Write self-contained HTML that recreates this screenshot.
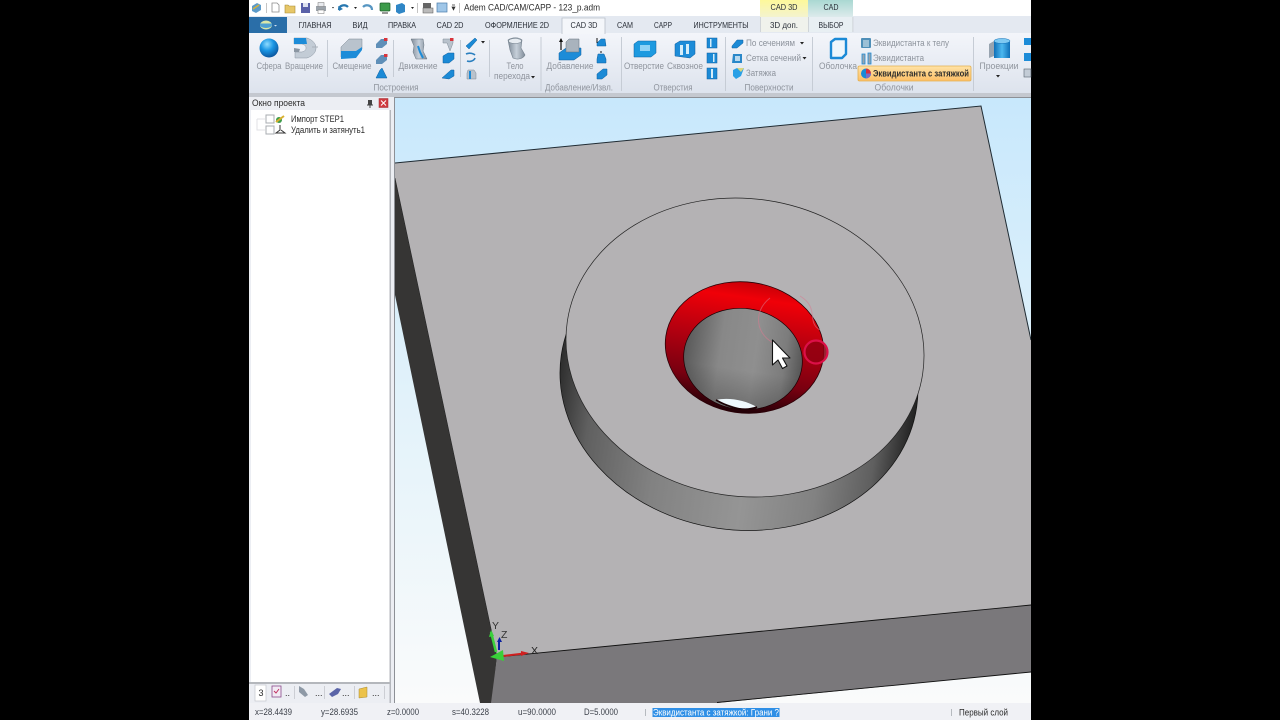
<!DOCTYPE html>
<html lang="ru"><head><meta charset="utf-8"><title>Adem CAD/CAM/CAPP</title>
<style>
html,body{margin:0;padding:0;background:#000;width:1280px;height:720px;overflow:hidden}
svg{display:block}
#root{filter:blur(.3px)}
text{font-family:"Liberation Sans","DejaVu Sans",sans-serif;font-size:9px}
.g{fill:#8d939c}.d{fill:#2b2b2b}.l{fill:#8f949d;text-anchor:middle}.m{text-anchor:middle;fill:#2a2f38;font-size:8.6px}
.b{fill:#1b8ad6;stroke:#0f5f9e;stroke-width:.5}.c{fill:#b9c2cc;stroke:#7f8a96;stroke-width:.5}
</style></head><body>
<svg id="root" width="1280" height="720" viewBox="0 0 1280 720" xmlns="http://www.w3.org/2000/svg">
<defs>
<linearGradient id="bg" x1="0" y1="0" x2="0" y2="1"><stop offset="0" stop-color="#c8e8fc"/><stop offset=".5" stop-color="#e2f2fa"/><stop offset="1" stop-color="#fafbfb"/></linearGradient>
<linearGradient id="rib" x1="0" y1="0" x2="0" y2="1"><stop offset="0" stop-color="#f3f5fa"/><stop offset="1" stop-color="#dde3ed"/></linearGradient>
<linearGradient id="side" gradientUnits="userSpaceOnUse" x1="560" y1="0" x2="920" y2="0"><stop offset="0" stop-color="#2e2e2e"/><stop offset=".1" stop-color="#606060"/><stop offset=".3" stop-color="#828282"/><stop offset=".55" stop-color="#959595"/><stop offset=".75" stop-color="#828282"/><stop offset=".9" stop-color="#5f5f5f"/><stop offset="1" stop-color="#1f1f1f"/></linearGradient>
<linearGradient id="red" gradientUnits="userSpaceOnUse" x1="745" y1="282" x2="745" y2="414"><stop offset="0" stop-color="#c80008"/><stop offset=".12" stop-color="#f00008"/><stop offset=".45" stop-color="#b00010"/><stop offset=".75" stop-color="#780010"/><stop offset="1" stop-color="#1c0006"/></linearGradient>
<linearGradient id="inn" gradientUnits="userSpaceOnUse" x1="684" y1="0" x2="802" y2="0"><stop offset="0" stop-color="#5a5a5a"/><stop offset=".3" stop-color="#888"/><stop offset=".6" stop-color="#8f8f8f"/><stop offset=".85" stop-color="#7c7c7c"/><stop offset="1" stop-color="#575757"/></linearGradient>
<linearGradient id="sh" gradientUnits="userSpaceOnUse" x1="0" y1="370" x2="0" y2="412"><stop offset="0" stop-color="#000" stop-opacity="0"/><stop offset="1" stop-color="#000" stop-opacity=".25"/></linearGradient>
<radialGradient id="sp" cx=".4" cy=".3" r=".75"><stop offset="0" stop-color="#8fdcff"/><stop offset=".45" stop-color="#1a96e4"/><stop offset="1" stop-color="#0a4f96"/></radialGradient>
<linearGradient id="hl" x1="0" y1="0" x2="0" y2="1"><stop offset="0" stop-color="#ffe3a6"/><stop offset="1" stop-color="#fdbf66"/></linearGradient>
<linearGradient id="yel" x1="0" y1="0" x2="0" y2="1"><stop offset="0" stop-color="#fdf89a"/><stop offset="1" stop-color="#f4f3cf"/></linearGradient>
<linearGradient id="tea" x1="0" y1="0" x2="0" y2="1"><stop offset="0" stop-color="#a9d8d2"/><stop offset="1" stop-color="#dcebec"/></linearGradient>
<linearGradient id="cyl" x1="0" y1="0" x2="1" y2="0"><stop offset="0" stop-color="#0f70b8"/><stop offset=".5" stop-color="#4cb8f0"/><stop offset="1" stop-color="#0f70b8"/></linearGradient>
<linearGradient id="gry" x1="0" y1="0" x2="1" y2="0"><stop offset="0" stop-color="#7f8b98"/><stop offset=".5" stop-color="#c7d0da"/><stop offset="1" stop-color="#7f8b98"/></linearGradient>
</defs>

<!-- app base -->
<rect x="249" y="0" width="782" height="720" fill="#eceef3"/>
<rect x="249" y="0" width="782" height="16" fill="#fff"/>
<rect x="249" y="16" width="782" height="17" fill="#e4e9f1"/>
<rect x="249" y="33" width="782" height="60" fill="url(#rib)"/>
<rect x="249" y="93" width="782" height="4" fill="#c4c8cf"/>

<!-- quick access toolbar -->
<g>
<path d="M252 6l5-3 4 2v5l-5 3-4-2z" fill="#5d9bc9"/><path d="M253 9l6-4" stroke="#d4b23c" stroke-width="1.500"/>
<rect x="266" y="3" width=".8" height="10" fill="#b5b5b5"/>
<path d="M272 3h5l2 2v7h-7z" fill="#fff" stroke="#8a8a8a" stroke-width=".8"/>
<path d="M285 5h3l1 1h6v7h-10z" fill="#e7c768" stroke="#a88a35" stroke-width=".6"/>
<rect x="301" y="3" width="9" height="10" fill="#5a61a8"/><rect x="303" y="3" width="5" height="4" fill="#dfe3ef"/>
<rect x="316" y="6" width="10" height="5" fill="#9ca3aa"/><rect x="318" y="2.500" width="6" height="4" fill="#e8eaee" stroke="#777" stroke-width=".5"/><rect x="318" y="10" width="6" height="3.500" fill="#fff" stroke="#777" stroke-width=".5"/>
<path d="M332 7l2 0 -1 1.500z" fill="#222"/>
<path d="M339 10c0-5 6-6 9-3" fill="none" stroke="#2878b0" stroke-width="2.200"/><path d="M338 6l1 5 4-2z" fill="#2878b0"/>
<path d="M354 7h3l-1.500 2z" fill="#222"/>
<path d="M372 10c0-5-6-6-9-3" fill="none" stroke="#5796c2" stroke-width="2.200"/>
<rect x="380" y="3" width="10" height="8" rx="1" fill="#3c9b4a" stroke="#1c5c28" stroke-width=".7"/><path d="M382 13h6" stroke="#333"/>
<path d="M396 5l6-2 3 2v7l-6 2-3-2z" fill="#2f86c6"/>
<path d="M411 7h3l-1.500 2z" fill="#222"/>
<rect x="417" y="3" width=".8" height="10" fill="#b5b5b5"/>
<rect x="423" y="3" width="8" height="5" fill="#666"/><rect x="423" y="8" width="10" height="5" fill="#bbb" stroke="#555" stroke-width=".5"/>
<rect x="437" y="3" width="10" height="9" fill="#9fc6e8" stroke="#4a7cab" stroke-width=".7"/>
<path d="M452 5h3M452 7h3l-1.500 3z" stroke="#333" stroke-width=".7" fill="#333"/>
<rect x="459" y="3" width=".8" height="10" fill="#b5b5b5"/>
</g>
<text x="464" y="10.500" class="d" style="font-size:9.600px" textLength="136" lengthAdjust="spacingAndGlyphs">Adem CAD/CAM/CAPP - 123_p.adm</text>

<!-- contextual tabs -->
<rect x="760" y="0" width="48" height="17" fill="url(#yel)"/>
<rect x="808" y="0" width="45" height="17" fill="url(#tea)"/>
<rect x="760" y="17" width="48" height="15" fill="#f0f2ec"/><rect x="808" y="17" width="45" height="15" fill="#e8eff3"/>
<rect x="760" y="17" width=".8" height="15" fill="#c9cdd2"/><rect x="808" y="17" width=".8" height="15" fill="#c9cdd2"/><rect x="852.500" y="17" width=".8" height="15" fill="#c9cdd2"/>
<text x="784" y="10" class="m" textLength="27" lengthAdjust="spacingAndGlyphs">CAD 3D</text>
<text x="831" y="10" class="m" textLength="15" lengthAdjust="spacingAndGlyphs">CAD</text>

<!-- tabs -->
<rect x="249" y="17" width="38" height="16" fill="#2a6ea8"/>
<ellipse cx="266" cy="25" rx="6" ry="4.500" fill="#dbe7a8"/><path d="M260 25a6 3 0 0 0 12 0v-1.500h-12z" fill="#4fa0d2"/><path d="M274 25h3l-1.500 1.500z" fill="#cfe0f0"/>
<rect x="562" y="18" width="43" height="16" fill="#f4f6fa"/>
<path d="M562 34V18h43v16" fill="none" stroke="#b9c0ca" stroke-width=".8"/>
<text x="315" y="28" class="m" textLength="33" lengthAdjust="spacingAndGlyphs">ГЛАВНАЯ</text>
<text x="360" y="28" class="m" textLength="15" lengthAdjust="spacingAndGlyphs">ВИД</text>
<text x="402" y="28" class="m" textLength="28" lengthAdjust="spacingAndGlyphs">ПРАВКА</text>
<text x="450" y="28" class="m" textLength="27" lengthAdjust="spacingAndGlyphs">CAD 2D</text>
<text x="517" y="28" class="m" textLength="64" lengthAdjust="spacingAndGlyphs">ОФОРМЛЕНИЕ 2D</text>
<text x="584" y="28" class="m" textLength="27" lengthAdjust="spacingAndGlyphs">CAD 3D</text>
<text x="625" y="28" class="m" textLength="16" lengthAdjust="spacingAndGlyphs">CAM</text>
<text x="663" y="28" class="m" textLength="18" lengthAdjust="spacingAndGlyphs">CAPP</text>
<text x="721" y="28" class="m" textLength="55" lengthAdjust="spacingAndGlyphs">ИНСТРУМЕНТЫ</text>
<text x="784" y="28" class="m" textLength="28" lengthAdjust="spacingAndGlyphs">3D доп.</text>
<text x="831" y="28" class="m" textLength="25" lengthAdjust="spacingAndGlyphs">ВЫБОР</text>

<!-- ribbon separators -->
<g fill="#c6ccd5">
<rect x="327" y="40" width="1" height="37"/><rect x="393" y="40" width="1" height="37"/><rect x="460" y="40" width="1" height="37"/><rect x="489" y="40" width="1" height="37"/>
<rect x="540.500" y="37" width="1" height="54"/><rect x="621" y="37" width="1" height="54"/><rect x="725" y="37" width="1" height="54"/><rect x="812" y="37" width="1" height="54"/><rect x="973" y="37" width="1" height="54"/>
</g>

<!-- big icons -->
<circle cx="269" cy="48" r="9.500" fill="url(#sp)"/>
<path d="M294 38h13c6 2 9 6 9 10s-3 8-9 10h-12v-6h7c3-1 4-2 4-4s-1-3-4-4h-8z" fill="#c3ccd6" stroke="#8b96a2" stroke-width=".5"/>
<path d="M294 38h12l1 6h-13z" fill="#1d8cd8"/><path d="M294 48l6 1-1 3h-5z" fill="#8b96a2"/><path d="M312 47h6" stroke="#a9b1ba"/>
<path d="M341 47l8-8h13v10l-6 8h-15z" fill="#b9c3cd" stroke="#7b8793" stroke-width=".5"/><path d="M341 51h15l6-4v3l-6 8-15 1z" fill="#1d8cd8"/>
<path d="M411 39h12l1 6-1 6 4 8h-11l-3-7 1-6z" fill="url(#gry)" stroke="#66737f" stroke-width=".5"/><path d="M418 46l2 6 3 6" stroke="#1d8cd8" stroke-width="2" fill="none"/>
<path d="M508 40c4-3 11-3 14 0l-1 8 4 7c-2 4-8 5-12 3l-3-8z" fill="url(#gry)" stroke="#74818d" stroke-width=".6"/><ellipse cx="515" cy="41" rx="6.500" ry="2.500" fill="#e7ecf1" stroke="#74818d" stroke-width=".5"/>
<path d="M559 53l7-5h15v7l-7 5h-15z" fill="#1d8cd8" stroke="#0f5f9e" stroke-width=".5"/><path d="M566 42l3-3h10v13h-13z" fill="#a9b3bd" stroke="#65717c" stroke-width=".5"/><path d="M561 39v11" stroke="#111" stroke-width="1.200"/><path d="M559 42l2-4 2 4z" fill="#111"/>
<path d="M634 44l4-3h18v12l-5 4h-17z" fill="#1d9ae0" stroke="#0f5f9e" stroke-width=".5"/><path d="M640 45h10v6h-10z" fill="#8fd2f6"/>
<path d="M675 44l5-3h15v13l-5 4-15-2z" fill="#1d8cd8" stroke="#0f5f9e" stroke-width=".5"/><rect x="680" y="45" width="3" height="10" fill="#d6edf9"/><rect x="686" y="44" width="3" height="10" fill="#d6edf9"/>
<path d="M831 42l4-3h11v15l-4 4h-11z" fill="#eef6fb" stroke="#1b8ad6" stroke-width="2.400" stroke-linejoin="round"/>
<rect x="994" y="41" width="16" height="17" fill="url(#cyl)"/><ellipse cx="1002" cy="41" rx="8" ry="2.500" fill="#7ec9f2" stroke="#0f70b8" stroke-width=".5"/><path d="M989 44l5-3v15l-5 2z" fill="#98a4b0"/>

<!-- small icons -->
<g>
<path d="M376 44l5-5h6v5l-5 4h-6z" fill="#5f8fb8"/><rect x="384" y="38" width="3.500" height="3" fill="#d8343c"/>
<path d="M376 60l5-5h6v5l-5 4h-6z" fill="#5f8fb8"/><rect x="384" y="54" width="3.500" height="3" fill="#d8343c"/>
<path d="M376 78l4-8 2-2 5 10z" class="b"/>
<path d="M443 39h10v4l-3 8-3-8h-4z" class="c"/><rect x="450" y="38" width="3.500" height="3" fill="#d8343c"/>
<path d="M443 56l5-3h6v6l-5 4h-6z" class="b"/>
<path d="M442 78l9-8h3v6l-5 3z" class="b"/>
<path d="M466 46l9-8 2 2-8 9z" class="b"/>
<path d="M466 54c4-2 8 0 9 1M467 61c3 1 7 0 8-3" stroke="#2a7fbf" stroke-width="1.600" fill="none"/>
<path d="M468 70l6 0 2 3v6h-9v-6z" class="c"/><path d="M470 71v8" stroke="#1b8ad6" stroke-width="2"/>
<path d="M481 41h4l-2 2.500z" fill="#222"/>
<path d="M597 43l4-4h4l1 7h-9z" class="b"/><path d="M597 38v5" stroke="#111"/>
<path d="M597 59l1-5h6l2 5v4h-9z" class="b"/><path d="M601 53v-2" stroke="#111"/>
<path d="M597 74l6-5h4v6l-5 4h-5z" class="b"/>
<g class="b"><rect x="707" y="38" width="10" height="10"/><rect x="707" y="53" width="10" height="10"/><rect x="707" y="68" width="10" height="11"/></g>
<g fill="#d6edf9"><rect x="710" y="39" width="1.500" height="8"/><rect x="713" y="54" width="1.500" height="8"/><rect x="711" y="69" width="2" height="9"/></g>
<path d="M732 46l5-6h6v3l-6 5h-5z" class="b"/>
<path d="M733 54h9v9h-10z" fill="#2a88c9"/><path d="M735 56h5v5h-5z" fill="#b9d9ee"/>
<path d="M733 70l4-2h7l-3 8-5 3-3-3z" fill="#2aa0e6"/><path d="M737 68h7l-3 4z" fill="#dcd77c"/>
<rect x="861" y="38" width="10" height="10" rx="1" fill="#4f8fb8"/><rect x="863" y="40" width="6" height="7" fill="#9cc0d6"/>
<path d="M862 54h3v10h-3zM868 53h3v11h-3z" fill="#9aa4ae" stroke="#1b8ad6" stroke-width=".8"/>
</g>
<path d="M800 42h4l-2 2.500zM802.500 57h4l-2 2.500z" fill="#222"/>
<path d="M531 76h4l-2 2.500zM996 75h4l-2 2.500z" fill="#222"/>
<path d="M1024 38h7v7h-7zM1024 53h7v8h-7z" fill="#1d8cd8"/><rect x="1024" y="69" width="7" height="8" fill="#c3ccd6" stroke="#56626e" stroke-width=".6"/>

<rect x="858" y="66" width="113" height="15" rx="1.500" fill="url(#hl)" stroke="#e3b050" stroke-width=".8"/>
<circle cx="866" cy="73.500" r="5" fill="#1b8ad6"/><path d="M866 73.500V68.500a5 5 0 0 1 5 5z" fill="#d63040"/><path d="M866 73.500h5a5 5 0 0 1-5 5z" fill="#7c6cc8"/>

<!-- ribbon labels -->
<text x="269" y="69" class="l" textLength="25" lengthAdjust="spacingAndGlyphs">Сфера</text>
<text x="304" y="69" class="l" textLength="38" lengthAdjust="spacingAndGlyphs">Вращение</text>
<text x="352" y="69" class="l" textLength="39" lengthAdjust="spacingAndGlyphs">Смещение</text>
<text x="418" y="69" class="l" textLength="39" lengthAdjust="spacingAndGlyphs">Движение</text>
<text x="515" y="69" class="l" textLength="17" lengthAdjust="spacingAndGlyphs">Тело</text>
<text x="512" y="79" class="l" textLength="36" lengthAdjust="spacingAndGlyphs">перехода</text>
<text x="570" y="69" class="l" textLength="47" lengthAdjust="spacingAndGlyphs">Добавление</text>
<text x="644" y="69" class="l" textLength="40" lengthAdjust="spacingAndGlyphs">Отверстие</text>
<text x="685" y="69" class="l" textLength="36" lengthAdjust="spacingAndGlyphs">Сквозное</text>
<text x="838" y="69" class="l" textLength="38" lengthAdjust="spacingAndGlyphs">Оболочка</text>
<text x="999" y="69" class="l" textLength="39" lengthAdjust="spacingAndGlyphs">Проекции</text>
<text x="746" y="46" class="g" textLength="49" lengthAdjust="spacingAndGlyphs">По сечениям</text>
<text x="746" y="61" class="g" textLength="55" lengthAdjust="spacingAndGlyphs">Сетка сечений</text>
<text x="746" y="76" class="g" textLength="30" lengthAdjust="spacingAndGlyphs">Затяжка</text>
<text x="873" y="46" class="g" textLength="76" lengthAdjust="spacingAndGlyphs">Эквидистанта к телу</text>
<text x="873" y="61" class="g" textLength="51" lengthAdjust="spacingAndGlyphs">Эквидистанта</text>
<text x="873" y="76.500" class="d" textLength="96" lengthAdjust="spacingAndGlyphs" style="font-weight:bold">Эквидистанта с затяжкой</text>
<text x="396" y="90.500" class="l" textLength="45" lengthAdjust="spacingAndGlyphs">Построения</text>
<text x="579" y="90.500" class="l" textLength="68" lengthAdjust="spacingAndGlyphs">Добавление/Извл.</text>
<text x="673" y="90.500" class="l" textLength="39" lengthAdjust="spacingAndGlyphs">Отверстия</text>
<text x="769" y="90.500" class="l" textLength="49" lengthAdjust="spacingAndGlyphs">Поверхности</text>
<text x="894" y="90.500" class="l" textLength="39" lengthAdjust="spacingAndGlyphs">Оболочки</text>

<!-- project pane -->
<rect x="249" y="97" width="146" height="606" fill="#eceef3"/>
<rect x="251" y="110" width="139" height="573" fill="#fff"/>
<rect x="389.500" y="110" width="1.500" height="593" fill="#b4b7bc"/>
<text x="252" y="106" class="d" textLength="53" lengthAdjust="spacingAndGlyphs">Окно проекта</text>
<rect x="368" y="100" width="4" height="5" fill="#444"/><path d="M367 105h6M370 105v3" stroke="#444"/>
<rect x="379" y="98.500" width="9" height="9" fill="#cf3a40" stroke="#a02a30" stroke-width=".5"/><path d="M381 100.500l5 5m0-5l-5 5" stroke="#fff"/>
<path d="M257 119v11h8M257 119h8" stroke="#e0e2e6" fill="none"/>
<rect x="266" y="115" width="8" height="8" fill="#fff" stroke="#a8acb2"/><rect x="266" y="126" width="8" height="8" fill="#fff" stroke="#a8acb2"/>
<circle cx="279" cy="120" r="3" fill="#3c9b4a"/><path d="M276 122l8-6" stroke="#d8b030" stroke-width="2"/>
<path d="M280 125v5l-4 3h9l-4-3" fill="none" stroke="#333"/>
<text x="291" y="122" class="d" textLength="53" lengthAdjust="spacingAndGlyphs">Импорт STEP1</text>
<text x="291" y="133" class="d" textLength="74" lengthAdjust="spacingAndGlyphs">Удалить и затянуть1</text>

<!-- pane tabs -->
<rect x="249" y="682" width="141" height="2" fill="#b4b7bc"/>
<rect x="255" y="685" width="11" height="16" fill="#fff" stroke="#c4c7cc" stroke-width=".7"/>
<text x="261" y="696" class="d" text-anchor="middle" style="font-size:9px">3</text>
<rect x="272" y="686" width="9" height="11" fill="#f2eaf4" stroke="#8a4a8a" stroke-width=".8"/><path d="M274 691l2 2 3-4" stroke="#c03060" fill="none"/>
<text x="285" y="696" class="d">..</text>
<path d="M299 686l5 3 4 6-3 2-6-5z" fill="#8e99a6"/>
<text x="315" y="696" class="d">...</text>
<path d="M329 694l8-6 4 1-3 5-6 3z" fill="#5a64a8"/>
<text x="342" y="696" class="d">...</text>
<path d="M359 689l8-2v10l-8 1z" fill="#ecc24a" stroke="#a88a35" stroke-width=".5"/>
<text x="372" y="696" class="d">...</text>
<g fill="#c4c7cc"><rect x="294" y="686" width=".8" height="13"/><rect x="324" y="686" width=".8" height="13"/><rect x="354" y="686" width=".8" height="13"/><rect x="384" y="686" width=".8" height="13"/></g>

<!-- viewport -->
<svg x="395" y="98" width="636" height="605" viewBox="395 98 636 605">
<rect x="395" y="98" width="636" height="605" fill="url(#bg)"/>
<path d="M395 178L497 657L492 703H480L395 295z" fill="#363534"/>
<path d="M497 657L1031 605V672L717 703H491z" fill="#7a787b"/>
<path d="M395 163L981 106L1031 340V605L497 657L395 178z" fill="#b4b2b4"/>
<path d="M395 163L981 106L1031 340" fill="none" stroke="#1f2b33" stroke-width="1"/>
<path d="M497 657L1031 605" stroke="#111" stroke-width=".9"/>
<path d="M717 702.500L1031 672" stroke="#111" stroke-width=".9"/>
<path d="M497 657L395 178" stroke="#222" stroke-width=".6"/>

<!-- boss -->
<ellipse cx="739" cy="381" rx="179.600" ry="148.800" transform="rotate(8.300 739 381)" fill="url(#side)" stroke="#111" stroke-width=".7"/>
<ellipse cx="745" cy="347.500" rx="179.600" ry="148.800" transform="rotate(8.300 745 347.500)" fill="#b4b2b4" stroke="#222" stroke-width=".7"/>

<!-- hole -->
<ellipse cx="744.500" cy="347.500" rx="79.500" ry="65.500" transform="rotate(8.300 744.500 347.500)" fill="url(#red)" stroke="#2a0006" stroke-width=".8"/>
<ellipse cx="743" cy="359" rx="59.500" ry="50.500" transform="rotate(8.300 743 359)" fill="url(#inn)" stroke="#1a0004" stroke-width=".7"/>
<ellipse cx="743" cy="359" rx="59" ry="50" transform="rotate(8.300 743 359)" fill="url(#sh)"/>
<path d="M716 400C728 397 745 400 757 407C750 410 745 409 739 408C732 406 723 403 716 400z" fill="#eef8fc"/>
<path d="M716 400C730 408 745 412 757 407" fill="none" stroke="#1a0004" stroke-width="1.800"/>

<!-- click ripple + cursor -->
<path d="M800 296C820 308 806 322 820 330M770 298C752 312 756 336 776 344" fill="none" stroke="#d87a90" stroke-width="1" opacity=".55"/>
<circle cx="816" cy="352" r="11.500" fill="#900012" fill-opacity=".8" stroke="#dc1048" stroke-width="2.200"/>
<path d="M772.500 340V365L778 360L782.500 368.500L787 366L782.500 358H790z" fill="#fff" stroke="#111" stroke-width="1.100" stroke-linejoin="round"/>

<!-- axis triad -->
<path d="M499 650V640" stroke="#0a1fa0" stroke-width="2"/><path d="M497 642l2.500-5 2.500 5z" fill="#0a1fa0"/>
<path d="M496 652L491 632" stroke="#3ad03a" stroke-width="2.500"/><path d="M489 637l2-7 3 6z" fill="#3ad03a"/>
<path d="M503 656L524 653.500" stroke="#d02020" stroke-width="2"/><path d="M521 651l8 2-8 3z" fill="#d02020"/>
<path d="M490 657l13-7 1 11z" fill="#39d039"/>
<text x="492" y="629" style="font-size:10.500px" fill="#333">Y</text>
<text x="501" y="638" style="font-size:10.500px" fill="#333">Z</text>
<text x="531" y="654" style="font-size:10.500px" fill="#222">X</text>
</svg>
<rect x="394" y="97" width="1" height="606" fill="#8d9096"/>
<rect x="394" y="97" width="637" height="1" fill="#8d9096"/>

<!-- status bar -->
<rect x="249" y="703" width="782" height="17" fill="#f0f1f5"/>
<g class="d" style="fill:#3a3f48">
<text x="255" y="715" textLength="37" lengthAdjust="spacingAndGlyphs">x=28.4439</text>
<text x="321" y="715" textLength="37" lengthAdjust="spacingAndGlyphs">y=28.6935</text>
<text x="387" y="715" textLength="32" lengthAdjust="spacingAndGlyphs">z=0.0000</text>
<text x="452" y="715" textLength="37" lengthAdjust="spacingAndGlyphs">s=40.3228</text>
<text x="518" y="715" textLength="38" lengthAdjust="spacingAndGlyphs">u=90.0000</text>
<text x="584" y="715" textLength="34" lengthAdjust="spacingAndGlyphs">D=5.0000</text>
</g>
<rect x="652.500" y="708" width="127" height="9" fill="#2f8fe6"/>
<text x="653" y="715.500" fill="#fff" textLength="126" lengthAdjust="spacingAndGlyphs">Эквидистанта с затяжкой: Грани ?</text>
<rect x="645" y="709" width=".8" height="7" fill="#a8acb2"/>
<rect x="951" y="709" width=".8" height="7" fill="#a8acb2"/>
<text x="959" y="715.500" class="d" textLength="49" lengthAdjust="spacingAndGlyphs">Первый слой</text>
</svg>
</body></html>
